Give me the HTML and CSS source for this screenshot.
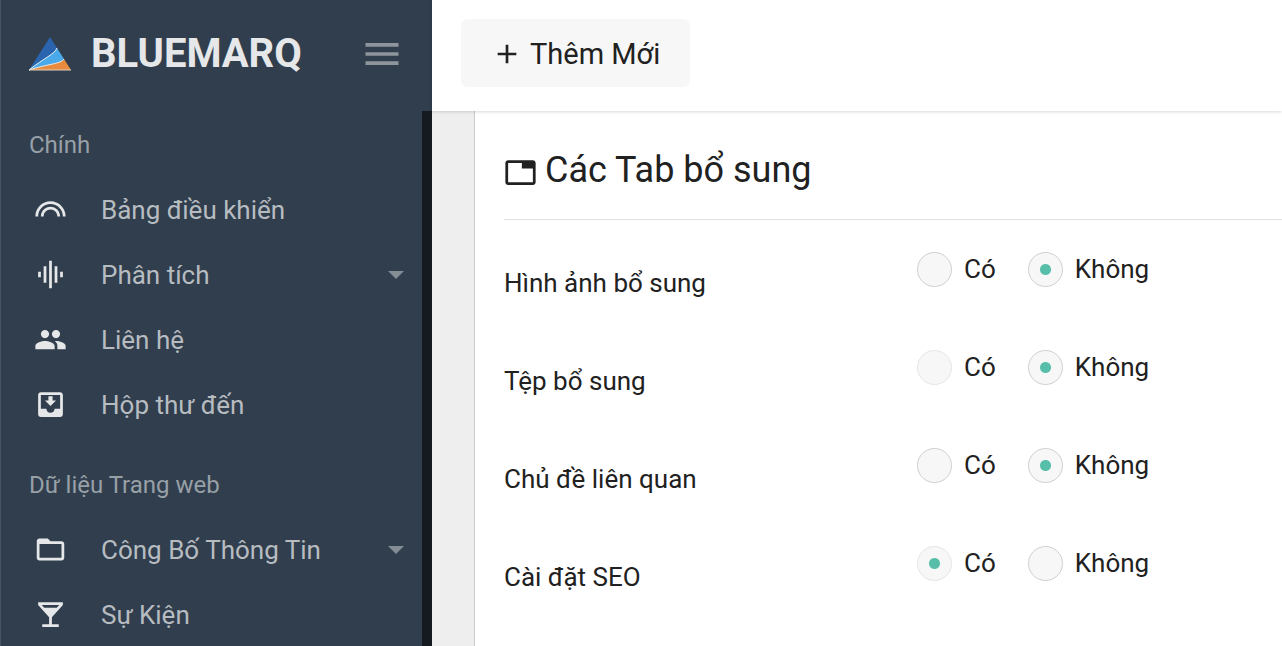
FILE: index.html
```html
<!DOCTYPE html>
<html lang="vi">

<head>
    <meta charset="utf-8">
    <title>BLUEMARQ</title>
    <link rel="stylesheet" href="styles.css">
</head>

<body>
    <aside class="sidebar">
        <div class="brand">
            <svg class="logo" viewBox="0 0 42 34">
                <path fill="#2b64ae" d="M21 0L0 33C15 21 26 17 28 11Z" />
                <path fill="#4aa9e8" d="M28 11C26 17 15 21 0 33C18 27 32 27 35 22Z" />
                <path fill="#e98b3e" d="M35 22C32 27 18 27 0 33H42Z" />
                <path fill="none" stroke="#e8f1f7" d="M28 11C26 17 15 21 0 33C18 27 32 27 35 22" />
                <path fill="none" stroke="#e3cdbb" d="M0 33H42" />
            </svg>
            <span class="brand-name">BLUEMARQ</span>
            <button class="toggle" type="button" aria-label="Menu">
                <svg viewBox="0 0 24 24"><path d="M3 18h18v-2H3v2zm0-5h18v-2H3v2zm0-7v2h18V6H3z" /></svg>
            </button>
        </div>
        <nav class="nav">
            <h2 class="nav-title">Chính</h2>
            <a class="nav-item" href="#">
                <svg class="icon" viewBox="0 0 24 24"><path d="M12 10c-3.860 0-7 3.140-7 7h2c0-2.760 2.240-5 5-5s5 2.240 5 5h2c0-3.860-3.140-7-7-7zm0-4C5.930 6 1 10.930 1 17h2c0-4.960 4.040-9 9-9s9 4.040 9 9h2c0-6.070-4.930-11-11-11z" /></svg>
                <span>Bảng điều khiển</span>
            </a>
            <a class="nav-item" href="#">
                <svg class="icon" viewBox="0 0 24 24"><path d="M7 18h2V6H7v12zm4 4h2V2h-2v20zm-8-8h2v-4H3v4zm12 4h2V6h-2v12zm4-8v4h2v-4h-2z" /></svg>
                <span>Phân tích</span>
                <svg class="caret" viewBox="0 0 16 8"><path d="M0 0h16L8 8z" /></svg>
            </a>
            <a class="nav-item" href="#">
                <svg class="icon" viewBox="0 0 24 24"><path d="M16 11c1.660 0 2.990-1.340 2.990-3S17.660 5 16 5c-1.660 0-3 1.340-3 3s1.340 3 3 3zm-8 0c1.660 0 2.990-1.340 2.990-3S9.660 5 8 5C6.340 5 5 6.340 5 8s1.340 3 3 3zm0 2c-2.330 0-7 1.170-7 3.500V19h14v-2.500c0-2.330-4.670-3.500-7-3.500zm8 0c-.29 0-.62.02-.97.05 1.160.84 1.970 1.970 1.970 3.450V19h6v-2.500c0-2.330-4.670-3.500-7-3.500z" /></svg>
                <span>Liên hệ</span>
            </a>
            <a class="nav-item" href="#">
                <svg class="icon" viewBox="0 0 24 24"><path d="M16 9h-2.500V6h-3v3H8l4 4 4-4zm3-6H4.990C3.880 3 3 3.900 3 5v14c0 1.100.88 2 1.990 2H19c1.100 0 2-.9 2-2V5c0-1.100-.9-2-2-2zm0 12h-4c0 1.660-1.350 3-3 3s-3-1.340-3-3H4.990V5H19v10z" /></svg>
                <span>Hộp thư đến</span>
            </a>
            <h2 class="nav-title nav-title-next">Dữ liệu Trang web</h2>
            <a class="nav-item" href="#">
                <svg class="icon" viewBox="0 0 24 24"><path d="M20 6h-8l-2-2H4c-1.100 0-1.990.9-1.990 2L2 18c0 1.100.9 2 2 2h16c1.100 0 2-.9 2-2V8c0-1.100-.9-2-2-2zm0 12H4V8h16v10z" /></svg>
                <span>Công Bố Thông Tin</span>
                <svg class="caret" viewBox="0 0 16 8"><path d="M0 0h16L8 8z" /></svg>
            </a>
            <a class="nav-item" href="#">
                <svg class="icon" viewBox="0 0 24 24"><path d="M21 5V3H3v2l8 9v5H6v2h12v-2h-5v-5l8-9zM7.430 7L5.660 5h12.690l-1.780 2H7.430z" /></svg>
                <span>Sự Kiện</span>
            </a>
        </nav>
    </aside>

    <div class="page">
        <header class="topbar">
            <button class="add-button" type="button">
                <svg viewBox="0 0 24 24"><path d="M19 13h-6v6h-2v-6H5v-2h6V5h2v6h6v2z" /></svg>
                <span>Thêm Mới</span>
            </button>
        </header>
        <main class="content">
            <form class="panel">
                <h1 class="panel-title">
                    <svg class="icon" viewBox="0 0 24 24"><path d="M21 3H3c-1.100 0-2 .9-2 2v14c0 1.100.9 2 2 2h18c1.100 0 2-.9 2-2V5c0-1.100-.9-2-2-2zm0 16H3V5h10v4h8v10z" /></svg>
                    <span>Các Tab bổ sung</span>
                </h1>
                <div class="row" role="radiogroup" aria-labelledby="images">
                    <span class="row-label" id="images">Hình ảnh bổ sung</span>
                    <label class="option"><input type="radio" name="images">Có</label>
                    <label class="option"><input type="radio" name="images" checked>Không</label>
                </div>
                <div class="row" role="radiogroup" aria-labelledby="files">
                    <span class="row-label" id="files">Tệp bổ sung</span>
                    <label class="option"><input class="light" type="radio" name="files">Có</label>
                    <label class="option"><input type="radio" name="files" checked>Không</label>
                </div>
                <div class="row" role="radiogroup" aria-labelledby="topics">
                    <span class="row-label" id="topics">Chủ đề liên quan</span>
                    <label class="option"><input type="radio" name="topics">Có</label>
                    <label class="option"><input type="radio" name="topics" checked>Không</label>
                </div>
                <div class="row" role="radiogroup" aria-labelledby="seo">
                    <span class="row-label" id="seo">Cài đặt SEO</span>
                    <label class="option"><input class="light" type="radio" name="seo" checked>Có</label>
                    <label class="option"><input type="radio" name="seo">Không</label>
                </div>
            </form>
        </main>
    </div>
</body>

</html>
```
FILE: styles.css
```css
* {
    box-sizing: border-box;
}

body {
    margin: 0;
    display: flex;
    height: 100vh;
    overflow: hidden;
    font-family: Roboto, sans-serif;
    font-size: 26px;
    color: #212121;
    background-color: #eeeeee;
}

button {
    border: 0;
    font: inherit;
    color: inherit;
}

svg {
    display: block;
    flex: none;
    fill: currentColor;
}

/* Sidebar */
.sidebar {
    flex: 0 0 432px;
    display: flex;
    flex-direction: column;
    background-color: #313e4d;
    border-left: 1px solid #445464;
}

.brand {
    flex: 0 0 111px;
    display: flex;
    align-items: center;
    padding: 0 28px;
    padding-bottom: 4px;
}

.logo {
    width: 42px;
    height: 34px;
}

.brand-name {
    margin-left: 20px;
    font-size: 40px;
    font-weight: 700;
    color: #e5e7e9;
}

.toggle {
    margin-left: auto;
    padding: 0;
    background: none;
    color: #8e959d;
}

.toggle svg {
    width: 44px;
    height: 44px;
}

.nav {
    flex: 1;
    min-height: 0;
    overflow: hidden;
    padding-top: 1px;
    border-right: 10px solid #151a21;
}

.nav-title,
.nav-item {
    display: flex;
    align-items: center;
    height: 65px;
    margin: 0;
}

.nav-title {
    padding-left: 28px;
    font-size: 24px;
    font-weight: 400;
    color: #98a0a7;
}

.nav-title-next {
    margin-top: 15px;
}

.nav-item {
    padding: 0 18px 0 33px;
    color: #b7bcc1;
    text-decoration: none;
}

.nav-item span {
    margin-left: 34px;
}

.icon {
    width: 33px;
    height: 33px;
}

.nav-item .icon {
    color: #e5e7e9;
}

.caret {
    width: 16px;
    height: 8px;
    margin-left: auto;
    color: #848c94;
}

/* Main area */
.page {
    flex: 1;
    min-width: 0;
    display: flex;
    flex-direction: column;
}

.topbar {
    flex: 0 0 111px;
    padding: 19px 29px;
    background-color: #ffffff;
    box-shadow: 0 1px 3px rgba(0, 0, 0, 0.15);
    z-index: 1;
}

.add-button {
    display: flex;
    align-items: center;
    gap: 7px;
    height: 68px;
    padding: 2px 30px 0;
    border-radius: 7px;
    background-color: #f7f7f7;
    font-size: 29px;
}

.add-button svg {
    width: 32px;
    height: 32px;
}

.content {
    flex: 1;
    min-height: 0;
    display: flex;
    padding-left: 42px;
}

.panel {
    flex: 1;
    padding: 0 0 0 29px;
    border-left: 1px solid #cccccc;
    background-color: #ffffff;
}

.panel-title {
    display: flex;
    align-items: center;
    gap: 8px;
    height: 109px;
    margin: 0 0 32px;
    padding-top: 10px;
    border-bottom: 1px solid #e0e0e0;
    font-size: 36px;
    font-weight: 400;
}

.panel-title .icon {
    margin-top: 5px;
}

.row {
    display: flex;
    align-items: flex-start;
    height: 98px;
}

.row-label {
    flex: 0 0 413px;
    padding-top: 14px;
    line-height: 35px;
}

.option {
    display: flex;
    align-items: center;
    gap: 12px;
    margin-right: 32px;
    line-height: 35px;
}

.option input {
    appearance: none;
    width: 35px;
    height: 35px;
    margin: 0;
    border: 1px solid #d0d0d0;
    border-radius: 50%;
    background-color: #f7f7f7;
}

.option input.light {
    border-color: #e6e6e6;
}

.option input:checked {
    background-image: radial-gradient(circle, #57bfa9 5px, transparent 6px);
}
```
